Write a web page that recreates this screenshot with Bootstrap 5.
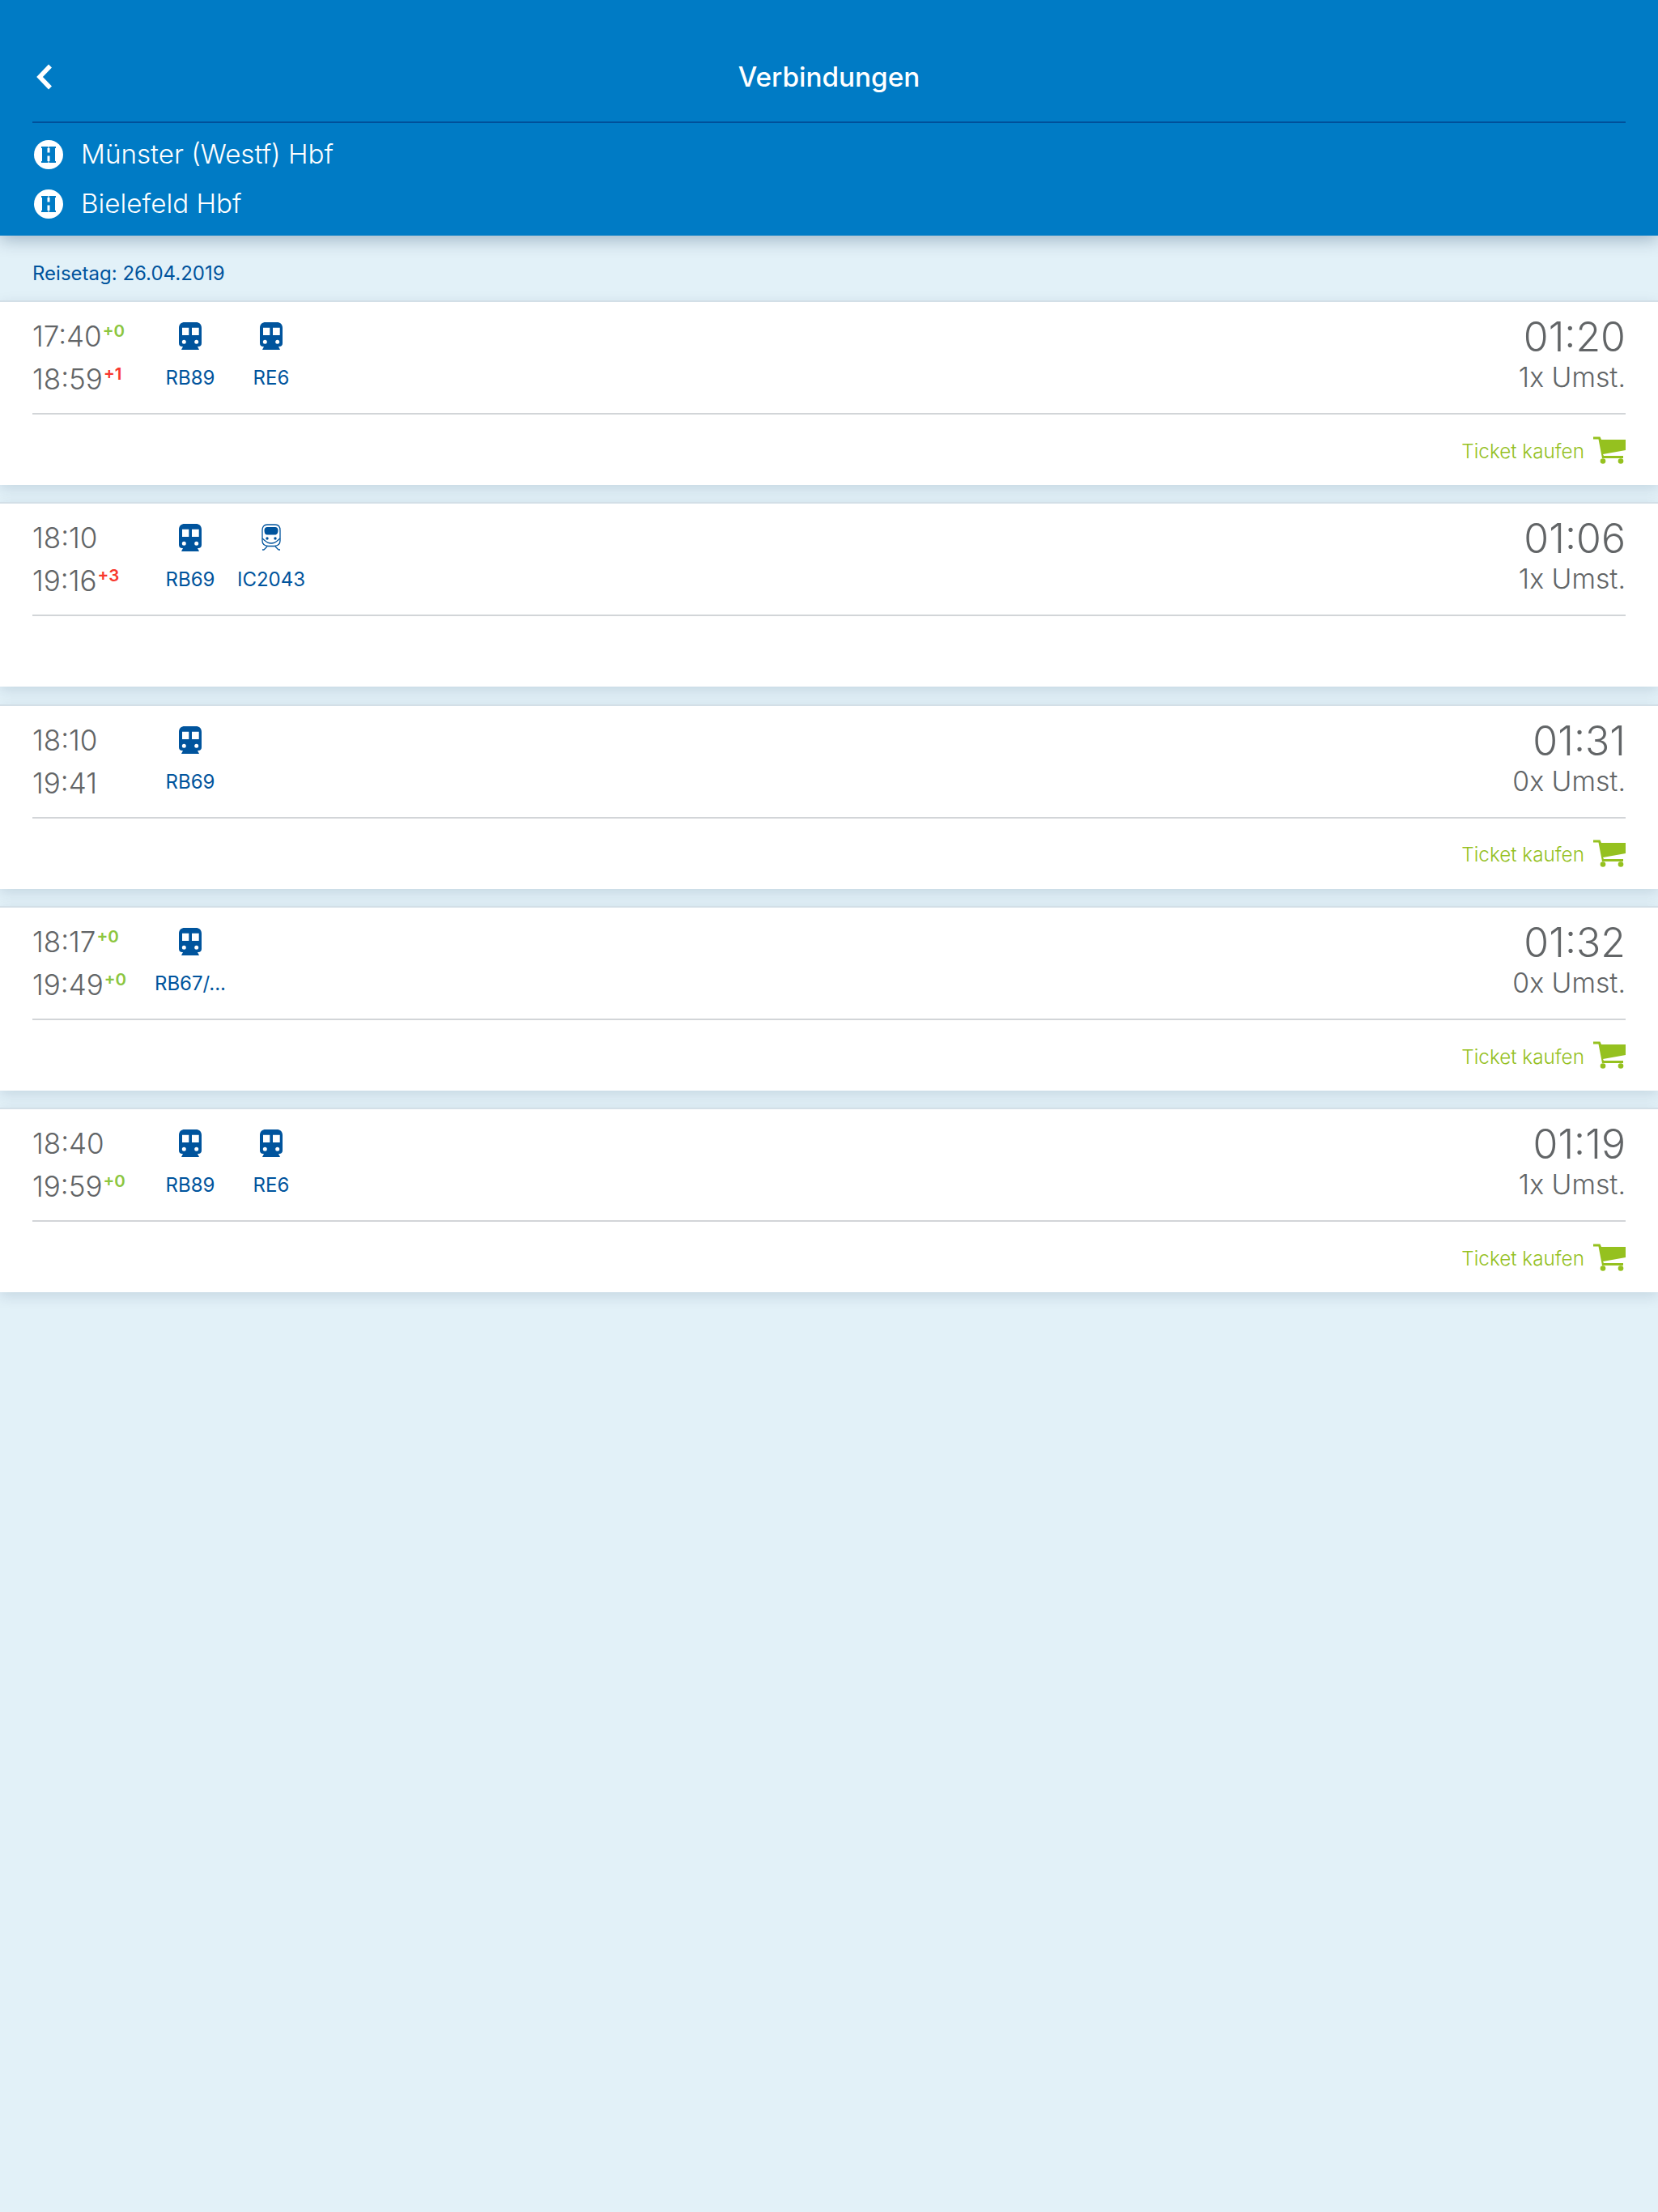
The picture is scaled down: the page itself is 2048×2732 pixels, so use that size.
<!DOCTYPE html>
<html lang="de">
<head>
    <meta charset="UTF-8">
    <meta name="viewport" content="width=device-width, initial-scale=1.0">
    <title>Verbindungen</title>
    <link href="https://cdn.jsdelivr.net/npm/bootstrap@5.3.0/dist/css/bootstrap.min.css" rel="stylesheet">
    <style>
        body {
            background-color: #e2f1f8;
            font-family: Inter, "Liberation Sans", sans-serif;
            min-height: 2732px;
        }
        .app-header {
            height: 291px;
            padding: 0 40px;
            background-color: #007bc5;
            color: #fff;
            box-shadow: 0 5px 20px rgba(0, 40, 80, .3);
            position: relative;
        }
        .top-bar {
            height: 152px;
            padding-top: 75px;
            border-bottom: 2px solid #00509a;
        }
        .top-title {
            font-size: 33.300px;
            font-weight: 500;
            line-height: 40px;
        }
        .back-btn {
            left: 2px;
            top: 78px;
        }
        .station-row {
            height: 61px;
            font-size: 33.200px;
            font-weight: 300;
            gap: 22px;
        }
        .station-icon {
            margin-left: 2px;
        }
        .station-list {
            padding-top: 8px;
        }
        .travel-day {
            height: 80px;
            padding: 29px 40px 0;
            font-size: 24px;
            line-height: 36px;
            color: #00549d;
        }
        .conn-list {
            gap: 21.300px;
        }
        .conn-card {
            height: 228px;
            padding: 0 40px;
            background-color: #fff;
            border-top: 2px solid #d3dfe7;
            box-shadow: 0 5px 16px rgba(0, 40, 80, .13);
        }
        .conn-main {
            height: 139px;
            border-bottom: 2px solid #d2d5d8;
        }
        .time-col {
            width: 145px;
            padding-top: 16px;
            color: #626567;
            font-size: 35px;
            font-weight: 300;
        }
        .time-row {
            height: 53px;
            line-height: 53px;
            white-space: nowrap;
        }
        .delay {
            font-size: 20.500px;
            font-weight: 600;
            top: -12px;
            position: relative;
            margin-left: 1px;
        }
        .delay-ok {
            color: #8cc63f;
        }
        .delay-late {
            color: #f8382e;
        }
        .train-col {
            width: 100px;
            padding-top: 25px;
            color: #00549d;
            font-size: 24px;
            text-align: center;
        }
        .train-icon {
            display: block;
            width: 28px;
            height: 34px;
            margin: 0 auto 21px;
        }
        .train-name {
            line-height: 28px;
            white-space: nowrap;
        }
        .dur-col {
            color: #626567;
            text-align: right;
            padding-top: 15px;
        }
        .dur-time {
            font-size: 50px;
            font-weight: 300;
            line-height: 56px;
        }
        .dur-change {
            font-size: 33.800px;
            font-weight: 300;
            line-height: 44px;
        }
        .ticket-row {
            height: 87px;
            color: #95c11f;
            font-size: 24.300px;
            font-weight: 300;
            gap: 11px;
        }
        .ticket-label {
            margin-top: 3px;
        }
        .cart-icon {
            width: 40px;
            height: 34px;
        }
    </style>
</head>
<body>

<svg class="d-none">
    <symbol id="train" viewBox="0 0 28 34">
        <path fill="#00549d" fill-rule="evenodd" d="M7 0h14c4 0 7 2.500 7 7v19c0 2.500-1.500 4-4 4H4c-2.500 0-4-1.500-4-4V7c0-4.500 3-7 7-7zM4 6.700V16h8.300V6.700zM16 6.700V16h8.700V6.700zM6.300 21.800a2.500 2.500 0 1 0 0 5 2.500 2.500 0 0 0 0-5zM21.700 21.800a2.500 2.500 0 1 0 0 5 2.500 2.500 0 0 0 0-5z"/>
        <path fill="#00549d" d="M5 30h18l2 4H3z"/>
    </symbol>
    <symbol id="ic-train" viewBox="0 0 26 34">
        <path fill="none" stroke="#00549d" stroke-width="1.300" d="M8 1h10c4 0 6 3 6 7v13c0 4-3 6-7 6.500H9C5 27 2 25 2 21V8c0-4 2-7 6-7z"/>
        <path fill="#00549d" d="M8 4h10c2 0 3.500 1.500 3.500 4 0 3-1 5-3 5.500H7.500c-2 0-3-2.500-3-5.500 0-2.500 1.500-4 3.500-4z"/>
        <path fill="none" stroke="#00549d" stroke-width="1.300" d="M2 18c3 2 5 6 11 6s8-4 11-6M8 28l-4 4M18 28l4 4M4 32h-2M22 32h2"/>
        <circle cx="8" cy="18" r="1.700" fill="#00549d"/>
        <circle cx="18" cy="18" r="1.700" fill="#00549d"/>
    </symbol>
    <symbol id="cart" viewBox="8 8 40 34">
        <path fill="#95c11f" d="M8 8.500h8.500L18 12h30v13l-28 5 1 2h24v3H19L14.500 11.500H8z"/>
        <circle cx="20" cy="38.500" r="3.300" fill="#95c11f"/>
        <circle cx="42" cy="38.500" r="3.300" fill="#95c11f"/>
    </symbol>
    <symbol id="halt" viewBox="0 0 36 36">
        <circle cx="18" cy="18" r="18" fill="#fff"/>
        <path fill="#007bc5" d="M9 8h8.500v2h-1v5.500h3V10h-1V8H27v2h-1v16h1v2h-8.500v-2h1v-6.500h-3V26h1v2H9v-2h1V10H9z"/>
    </symbol>
</svg>

<header class="app-header">
    <div class="top-bar d-flex justify-content-center position-relative">
        <svg class="back-btn position-absolute" width="24" height="34" viewBox="0 0 24 34">
            <path fill="none" stroke="#fff" stroke-width="5.500" d="M20 3.500 7 17l13 13.500"/>
        </svg>
        <div class="top-title">Verbindungen</div>
    </div>
    <div class="station-list">
        <div class="station-row d-flex align-items-center">
            <svg class="station-icon" width="36" height="36"><use href="#halt"/></svg>
            <span>Münster (Westf) Hbf</span>
        </div>
        <div class="station-row d-flex align-items-center">
            <svg class="station-icon" width="36" height="36"><use href="#halt"/></svg>
            <span>Bielefeld Hbf</span>
        </div>
    </div>
</header>

<div class="travel-day">Reisetag: 26.04.2019</div>

<main class="conn-list d-flex flex-column">

    <section class="conn-card">
        <div class="conn-main d-flex">
            <div class="time-col">
                <div class="time-row">17:40<span class="delay delay-ok">+0</span></div>
                <div class="time-row">18:59<span class="delay delay-late">+1</span></div>
            </div>
            <div class="train-col"><svg class="train-icon"><use href="#train"/></svg><div class="train-name">RB89</div></div>
            <div class="train-col"><svg class="train-icon"><use href="#train"/></svg><div class="train-name">RE6</div></div>
            <div class="dur-col ms-auto">
                <div class="dur-time">01:20</div>
                <div class="dur-change">1x Umst.</div>
            </div>
        </div>
        <div class="ticket-row d-flex justify-content-end align-items-center">
            <span class="ticket-label">Ticket kaufen</span>
            <svg class="cart-icon"><use href="#cart"/></svg>
        </div>
    </section>

    <section class="conn-card">
        <div class="conn-main d-flex">
            <div class="time-col">
                <div class="time-row">18:10</div>
                <div class="time-row">19:16<span class="delay delay-late">+3</span></div>
            </div>
            <div class="train-col"><svg class="train-icon"><use href="#train"/></svg><div class="train-name">RB69</div></div>
            <div class="train-col"><svg class="train-icon"><use href="#ic-train"/></svg><div class="train-name">IC2043</div></div>
            <div class="dur-col ms-auto">
                <div class="dur-time">01:06</div>
                <div class="dur-change">1x Umst.</div>
            </div>
        </div>
    </section>

    <section class="conn-card">
        <div class="conn-main d-flex">
            <div class="time-col">
                <div class="time-row">18:10</div>
                <div class="time-row">19:41</div>
            </div>
            <div class="train-col"><svg class="train-icon"><use href="#train"/></svg><div class="train-name">RB69</div></div>
            <div class="dur-col ms-auto">
                <div class="dur-time">01:31</div>
                <div class="dur-change">0x Umst.</div>
            </div>
        </div>
        <div class="ticket-row d-flex justify-content-end align-items-center">
            <span class="ticket-label">Ticket kaufen</span>
            <svg class="cart-icon"><use href="#cart"/></svg>
        </div>
    </section>

    <section class="conn-card">
        <div class="conn-main d-flex">
            <div class="time-col">
                <div class="time-row">18:17<span class="delay delay-ok">+0</span></div>
                <div class="time-row">19:49<span class="delay delay-ok">+0</span></div>
            </div>
            <div class="train-col"><svg class="train-icon"><use href="#train"/></svg><div class="train-name">RB67/...</div></div>
            <div class="dur-col ms-auto">
                <div class="dur-time">01:32</div>
                <div class="dur-change">0x Umst.</div>
            </div>
        </div>
        <div class="ticket-row d-flex justify-content-end align-items-center">
            <span class="ticket-label">Ticket kaufen</span>
            <svg class="cart-icon"><use href="#cart"/></svg>
        </div>
    </section>

    <section class="conn-card">
        <div class="conn-main d-flex">
            <div class="time-col">
                <div class="time-row">18:40</div>
                <div class="time-row">19:59<span class="delay delay-ok">+0</span></div>
            </div>
            <div class="train-col"><svg class="train-icon"><use href="#train"/></svg><div class="train-name">RB89</div></div>
            <div class="train-col"><svg class="train-icon"><use href="#train"/></svg><div class="train-name">RE6</div></div>
            <div class="dur-col ms-auto">
                <div class="dur-time">01:19</div>
                <div class="dur-change">1x Umst.</div>
            </div>
        </div>
        <div class="ticket-row d-flex justify-content-end align-items-center">
            <span class="ticket-label">Ticket kaufen</span>
            <svg class="cart-icon"><use href="#cart"/></svg>
        </div>
    </section>

</main>

<script src="https://cdn.jsdelivr.net/npm/bootstrap@5.3.0/dist/js/bootstrap.bundle.min.js"></script>
</body>
</html>
